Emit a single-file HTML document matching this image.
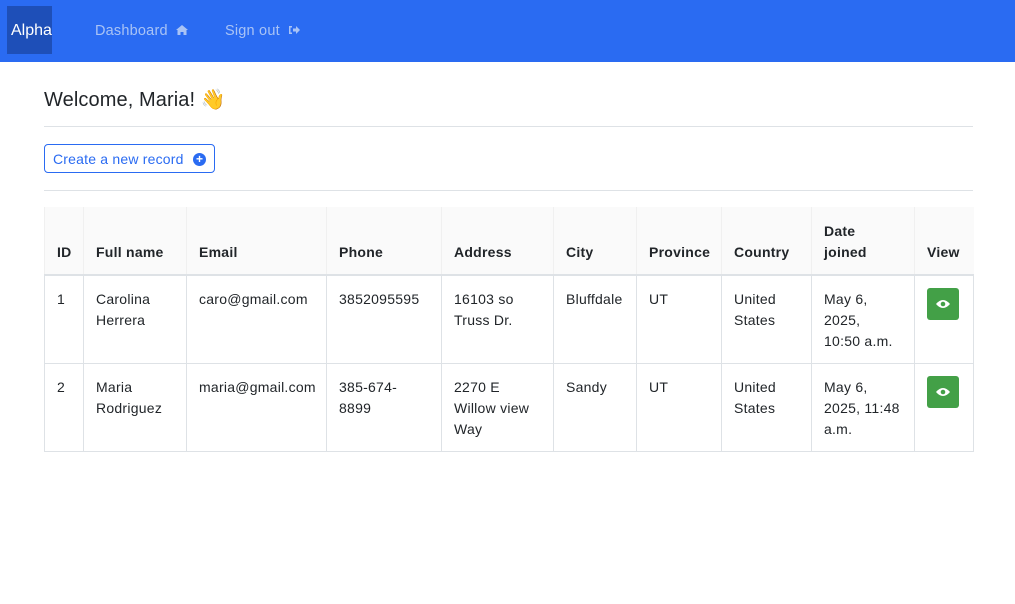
<!DOCTYPE html>
<html><head><meta charset="utf-8"><style>
*{box-sizing:border-box}
body{margin:0;font-family:"Liberation Sans",Arial,sans-serif;color:#212529;background:#fff;width:1015px;height:604px;overflow:hidden}
.nav{height:62px;background:#2a6bf2;position:relative}
.brand{position:absolute;left:7px;top:6px;width:45px;height:48px;background:#1e4fb8;color:#fff;font-size:16px;line-height:50px;padding-left:4px;overflow:hidden;white-space:nowrap}
.nl{position:absolute;top:23px;color:#a9c3f5;font-size:14.5px;letter-spacing:0.2px}
h1{position:absolute;left:44px;top:87px;margin:0;font-size:20px;font-weight:400;letter-spacing:0.1px}
.hr{position:absolute;left:44px;width:929px;height:1px;background:#dee2e6}
.btn{position:absolute;left:44px;top:144px;width:171px;height:29px;border:1px solid #2a6bf2;border-radius:4px;color:#2a6bf2;font-size:14px;line-height:28px;padding-left:8px;letter-spacing:0.2px}
.btn .pl{position:absolute;right:8px;top:8px;width:13px;height:13px;border-radius:50%;background:#2a6bf2;color:#fff;font-size:12px;line-height:13px;text-align:center;font-weight:bold;letter-spacing:0}
table{position:absolute;left:44px;top:207px;width:929px;border-collapse:collapse;table-layout:fixed;font-size:14px;line-height:21px;letter-spacing:0.25px}
th{background:#fafafa;text-align:left;vertical-align:bottom;padding:12px;font-weight:bold;border-bottom:2px solid #dee2e6;border-left:1px solid #f0f0f0;height:68px;padding-bottom:11px}
td{vertical-align:top;padding:13px 12px 11px;border:1px solid #dee2e6;height:88px}
.eye{display:block;width:32px;height:32px;background:#43a047;border-radius:3px;position:relative;margin-top:-1px}
.eye svg{position:absolute;left:9px;top:11px}
</style></head><body>
<div class="nav"><div class="brand">Alpha</div>
<span class="nl" style="left:95px">Dashboard &nbsp;<svg width="12" height="10" viewBox="0 0 12 10"><path d="M6 0L0 5h1.5v5h3V7h3v3h3V5H12z" fill="#a9c3f5"/></svg></span>
<span class="nl" style="left:225px">Sign out &nbsp;<svg width="12" height="10" viewBox="0 0 12 10"><path d="M1 1h3v1.5H2.5v5H4V9H1zM5 3.5h3V1l4 4-4 4V6.5H5z" fill="#a9c3f5"/></svg></span></div>
<h1>Welcome, Maria! 👋</h1>
<div class="hr" style="top:126px"></div>
<div class="btn">Create a new record<span class="pl">+</span></div>
<div class="hr" style="top:190px"></div>
<table>
<colgroup><col style="width:39px"><col style="width:103px"><col style="width:140px"><col style="width:115px"><col style="width:112px"><col style="width:83px"><col style="width:85px"><col style="width:90px"><col style="width:103px"><col style="width:59px"></colgroup>
<tr><th>ID</th><th>Full name</th><th>Email</th><th>Phone</th><th>Address</th><th>City</th><th>Province</th><th>Country</th><th>Date<br>joined</th><th>View</th></tr>
<tr><td>1</td><td>Carolina Herrera</td><td>caro@gmail.com</td><td>3852095595</td><td>16103 so Truss Dr.</td><td>Bluffdale</td><td>UT</td><td>United States</td><td>May 6,<br>2025,<br>10:50 a.m.</td><td><span class="eye"><svg width="14" height="10" viewBox="0 0 14 10"><path d="M0 5Q7-3 14 5Q7 13 0 5z" fill="#fff"/><circle cx="7" cy="5" r="2.3" fill="#43a047"/></svg></span></td></tr>
<tr><td>2</td><td>Maria Rodriguez</td><td>maria@gmail.com</td><td>385-674-<br>8899</td><td>2270 E Willow view Way</td><td>Sandy</td><td>UT</td><td>United States</td><td>May 6,<br>2025, 11:48<br>a.m.</td><td><span class="eye"><svg width="14" height="10" viewBox="0 0 14 10"><path d="M0 5Q7-3 14 5Q7 13 0 5z" fill="#fff"/><circle cx="7" cy="5" r="2.3" fill="#43a047"/></svg></span></td></tr>
</table>
</body></html>
